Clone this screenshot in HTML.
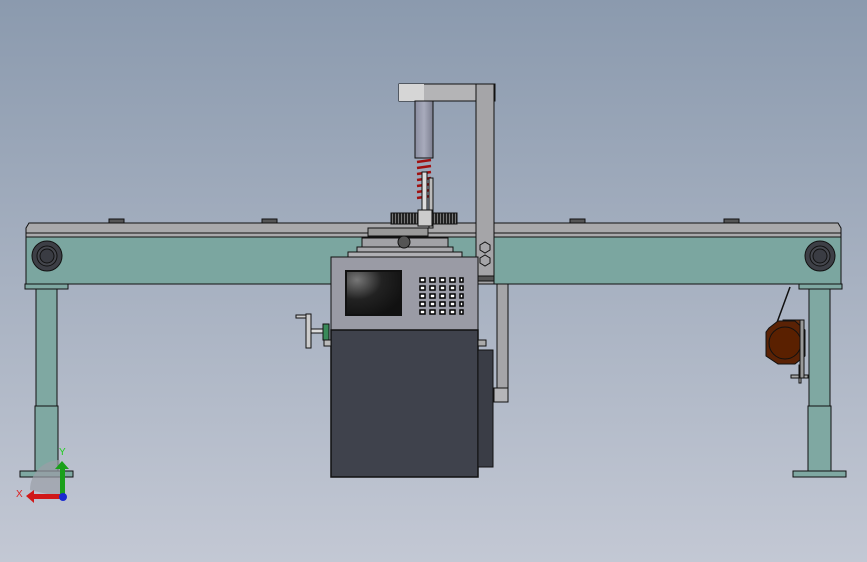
<!DOCTYPE html>
<html><head><style>html,body{margin:0;padding:0;overflow:hidden}body{width:867px;height:562px;background:linear-gradient(#8b9aae,#c3c8d4)}svg{display:block}</style></head><body>
<svg width="867" height="562" viewBox="0 0 867 562" xmlns="http://www.w3.org/2000/svg" stroke="#111" stroke-width="1">
<defs><linearGradient id="cy" x1="0" x2="1"><stop offset="0" stop-color="#8a8da0"/><stop offset="0.5" stop-color="#a8abbc"/><stop offset="1" stop-color="#7c7f90"/></linearGradient>
<radialGradient id="sc" cx="0.2" cy="0.2" r="0.9"><stop offset="0" stop-color="#777"/><stop offset="0.5" stop-color="#222"/><stop offset="1" stop-color="#111"/></radialGradient>
<pattern id="gt" width="3" height="11" patternUnits="userSpaceOnUse"><rect width="3" height="11" fill="#222" stroke="none"/><rect x="2" width="1" height="11" fill="#777" stroke="none"/></pattern></defs>
<!-- legs -->
<rect x="25" y="284" width="43" height="5" fill="#7fa8a2"/>
<rect x="36" y="289" width="21" height="117" fill="#7fa8a2"/>
<rect x="35" y="406" width="23" height="65" fill="#7fa8a2"/>
<rect x="20" y="471" width="53" height="6" fill="#7fa8a2"/>
<rect x="799" y="284" width="43" height="5" fill="#7fa8a2"/>
<rect x="809" y="289" width="21" height="117" fill="#7fa8a2"/>
<rect x="808" y="406" width="23" height="65" fill="#7fa8a2"/>
<rect x="793" y="471" width="53" height="6" fill="#7fa8a2"/>
<!-- rail pads -->
<g fill="#555"><rect x="109" y="219" width="15" height="4"/><rect x="262" y="219" width="15" height="4"/><rect x="570" y="219" width="15" height="4"/><rect x="724" y="219" width="15" height="4"/></g>
<!-- beam -->
<rect x="26" y="237" width="815" height="47" fill="#7ba6a0"/>
<path d="M29 223 H838 L841 228 V237 H26 V228 Z" fill="#a9a9ab"/>
<line x1="26" y1="233" x2="841" y2="233"/>
<circle cx="47" cy="256" r="15" fill="#3d3f46"/><circle cx="47" cy="256" r="10" fill="#45474e"/><circle cx="47" cy="256" r="7" fill="#3a3c43"/>
<circle cx="820" cy="256" r="15" fill="#3d3f46"/><circle cx="820" cy="256" r="10" fill="#45474e"/><circle cx="820" cy="256" r="7" fill="#3a3c43"/>
<!-- right strut -->
<rect x="497" y="284" width="11" height="118" fill="#a5a5a8"/>
<rect x="494" y="388" width="14" height="14" fill="#b5b5b8"/>
<!-- arm -->
<rect x="399" y="84" width="96" height="17" fill="#b4b4b6"/>
<rect x="399" y="84" width="25" height="17" fill="#d6d6d6" stroke="none"/>
<rect x="476" y="84" width="18" height="200" fill="#a5a5a8"/>
<rect x="476" y="276" width="18" height="5" fill="#555"/>
<path d="M480 245 l5 -3 l5 3 v5 l-5 3 l-5 -3z M480 258 l5 -3 l5 3 v5 l-5 3 l-5 -3z" fill="none"/>
<rect x="415" y="101" width="18" height="57" fill="url(#cy)"/>
<g stroke="#a01010" stroke-width="2.5"><path d="M417 162 l14 -2 M417 168 l14 -2 M417 174 l14 -2 M417 180 l14 -2 M417 186 l14 -2 M417 192 l14 -2 M417 198 l14 -2"/></g>
<rect x="422" y="172" width="5" height="40" fill="#ddd"/>
<rect x="429" y="178" width="4" height="50" fill="#bbb"/>
<rect x="391" y="213" width="66" height="11" fill="url(#gt)"/>
<rect x="418" y="210" width="14" height="16" fill="#ccc"/>
<rect x="368" y="228" width="60" height="8" fill="#999"/>
<rect x="362" y="238" width="86" height="10" fill="#a2a2a6"/>
<rect x="357" y="247" width="96" height="5" fill="#a8a8ac"/>
<rect x="348" y="252" width="114" height="5" fill="#b0b0b4"/>
<circle cx="404" cy="242" r="6" fill="#555"/>
<!-- control box -->
<rect x="331" y="257" width="147" height="73" fill="#9a9ba5"/>
<rect x="346" y="271" width="55" height="44" fill="url(#sc)" stroke-width="2"/>
<g fill="#fff" stroke="#000" stroke-width="1.5">
<rect x="420" y="278" width="5" height="4"/><rect x="430" y="278" width="5" height="4"/><rect x="440" y="278" width="5" height="4"/><rect x="450" y="278" width="5" height="4"/><rect x="460" y="278" width="3" height="4"/>
<rect x="420" y="286" width="5" height="4"/><rect x="430" y="286" width="5" height="4"/><rect x="440" y="286" width="5" height="4"/><rect x="450" y="286" width="5" height="4"/><rect x="460" y="286" width="3" height="4"/>
<rect x="420" y="294" width="5" height="4"/><rect x="430" y="294" width="5" height="4"/><rect x="440" y="294" width="5" height="4"/><rect x="450" y="294" width="5" height="4"/><rect x="460" y="294" width="3" height="4"/>
<rect x="420" y="302" width="5" height="4"/><rect x="430" y="302" width="5" height="4"/><rect x="440" y="302" width="5" height="4"/><rect x="450" y="302" width="5" height="4"/><rect x="460" y="302" width="3" height="4"/>
<rect x="420" y="310" width="5" height="4"/><rect x="430" y="310" width="5" height="4"/><rect x="440" y="310" width="5" height="4"/><rect x="450" y="310" width="5" height="4"/><rect x="460" y="310" width="3" height="4"/>
</g>
<rect x="331" y="330" width="147" height="147" fill="#3f424c" stroke-width="1.5"/>
<rect x="478" y="350" width="15" height="117" fill="#3a3d46"/>
<rect x="478" y="340" width="8" height="6" fill="#aaa"/>
<!-- handwheel -->
<rect x="296" y="315" width="12" height="3" fill="#ccc"/>
<rect x="306" y="314" width="5" height="34" fill="#ccc"/>
<rect x="311" y="329" width="15" height="4" fill="#ddd"/>
<rect x="323" y="324" width="6" height="16" fill="#3a8a5a"/>
<rect x="324" y="340" width="7" height="6" fill="#bbb"/>
<!-- motor -->
<path d="M790 287 L775 328" stroke-width="1.5" fill="none"/>
<rect x="783" y="320" width="18" height="38" fill="#6a3010"/>
<path d="M769 328 L778 321 H795 L805 330 V356 L795 364 H778 L766 356 V332 Z" fill="#5a2205"/>
<circle cx="785" cy="343" r="16" fill="#5a2000"/>
<rect x="791" y="375" width="17" height="3" fill="#aaa"/>
<rect x="799" y="365" width="2" height="18" fill="#bbb"/>
<rect x="800" y="320" width="4" height="58" fill="#999"/>
<!-- axis triad -->
<path d="M30 490 A30 30 0 0 1 60 460 V497 Z" fill="#9a9ea6" stroke="none" opacity="0.7"/>
<rect x="60" y="467" width="5" height="29" fill="#1aa01a" stroke="none"/>
<path d="M55 469 L62 461 L69 469 Z" fill="#1aa01a" stroke="none"/>
<rect x="32" y="494" width="30" height="5" fill="#d01818" stroke="none"/>
<path d="M34 490 L26 496 L34 503 Z" fill="#d01818" stroke="none"/>
<circle cx="63" cy="497" r="4" fill="#1a2ad0" stroke="none"/>
<text x="59" y="455" font-family="Liberation Sans, sans-serif" font-size="10" fill="#2c2" stroke="none">Y</text>
<text x="16" y="497" font-family="Liberation Sans, sans-serif" font-size="10" fill="#d22" stroke="none">X</text>
</svg>
</body></html>
